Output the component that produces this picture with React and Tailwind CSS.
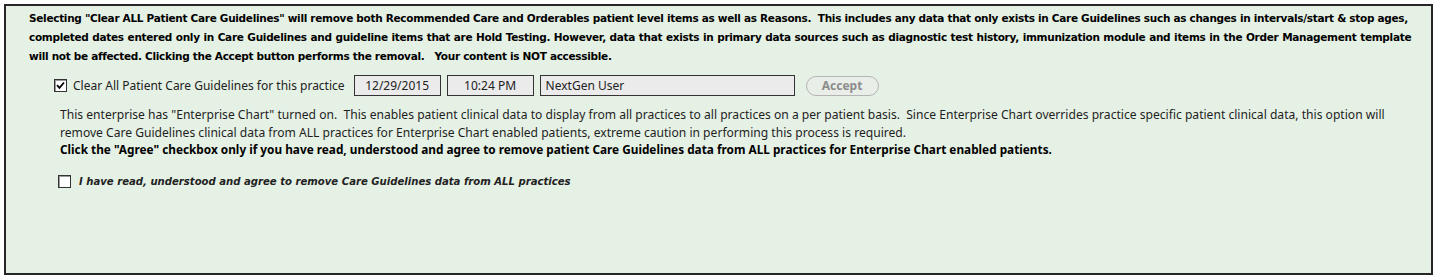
import React from "react";

function CheckBox({ checked }) {
  return (
    <span className="inline-flex w-[13px] h-[13px] shrink-0 items-center justify-center border border-[#333] bg-white shadow-[inset_1px_1px_0_#9a9a9a]">
      {checked && (
        <svg width="9" height="9" viewBox="0 0 9 9">
          <path d="M1 4.2 L3.5 6.8 L8 1.5" fill="none" stroke="#000" strokeWidth="1.8" />
        </svg>
      )}
    </span>
  );
}

export default function App() {
  return (
    <div className="w-[1437px] h-[280px] bg-white p-1">
      <div className="h-[271px] border-2 border-[#262626] bg-[#e6f1e5] pl-[23px] pt-[3px]">
        <div className="font-['DejaVu_Sans',sans-serif] font-bold text-[10.5px] tracking-[-0.3px] leading-[19px] text-black whitespace-pre">
          <div>{'Selecting "Clear ALL Patient Care Guidelines" will remove both Recommended Care and Orderables patient level items as well as Reasons.  This includes any data that only exists in Care Guidelines such as changes in intervals/start & stop ages,'}</div>
          <div className="[word-spacing:0.4px]">completed dates entered only in Care Guidelines and guideline items that are Hold Testing. However, data that exists in primary data sources such as diagnostic test history, immunization module and items in the Order Management template</div>
          <div>will not be affected. Clicking the Accept button performs the removal.   Your content is NOT accessible.</div>
        </div>

        <div className="mt-[9px] ml-[25px] flex items-center h-[21px] font-['Noto_Sans',sans-serif] text-[12px] text-[#222]">
          <CheckBox checked />
          <span className="ml-[6px] whitespace-nowrap">Clear All Patient Care Guidelines for this practice</span>
          <div className="ml-[9px] w-[87px] h-[21px] border border-[#333] bg-[#ebebeb] flex items-center justify-center">12/29/2015</div>
          <div className="ml-[6px] w-[87px] h-[21px] border border-[#333] bg-[#ebebeb] flex items-center justify-center">10:24 PM</div>
          <div className="ml-[6px] w-[255px] h-[21px] border border-[#333] bg-[#ebebeb] flex items-center pl-[5px]">NextGen User</div>
          <div className="ml-[11px] w-[73px] h-[20px] rounded-full border border-[#b4b4b4] bg-[#e9eee8] flex items-center justify-center font-bold text-[12px] text-[#8c8c8c]">Accept</div>
        </div>

        <div className="mt-[10px] ml-[31px] font-['Noto_Sans',sans-serif] text-[12.1px] leading-[17.5px] text-[#1e1e1e] whitespace-pre">
          <div>This enterprise has "Enterprise Chart" turned on.  This enables patient clinical data to display from all practices to all practices on a per patient basis.  Since Enterprise Chart overrides practice specific patient clinical data, this option will</div>
          <div>remove Care Guidelines clinical data from ALL practices for Enterprise Chart enabled patients, extreme caution in performing this process is required.</div>
          <div className="font-bold text-black text-[11.8px]">Click the "Agree" checkbox only if you have read, understood and agree to remove patient Care Guidelines data from ALL practices for Enterprise Chart enabled patients.</div>
        </div>

        <div className="mt-[15px] ml-[29px] flex items-center h-[16px]">
          <CheckBox />
          <span className="ml-[8px] font-['DejaVu_Sans',sans-serif] font-bold italic text-[10.1px] text-[#222] whitespace-nowrap">I have read, understood and agree to remove Care Guidelines data from ALL practices</span>
        </div>
      </div>
    </div>
  );
}
